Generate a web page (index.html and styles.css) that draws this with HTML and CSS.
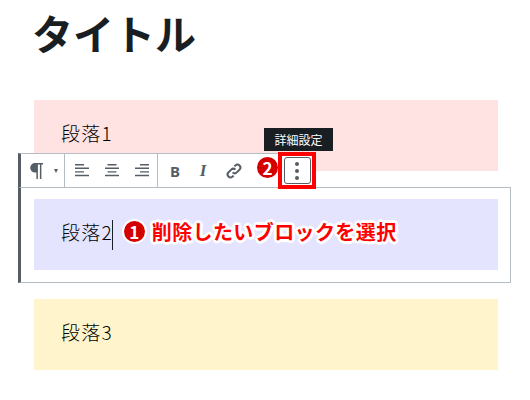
FILE: index.html
```html
<!DOCTYPE html>
<html lang="ja">
<head>
  <meta charset="UTF-8">
  <title>タイトル</title>
  <link rel="stylesheet" href="styles.css">
</head>
<body>
  <h1 class="title">タイトル</h1>

  <p class="block block-pink">段落1</p>

  <div class="selected">
    <div class="toolbar">
      <div class="tool-group tool-type">
        <svg width="14" height="16" viewBox="0 0 14 16"><path d="M13 0H5a4.8 4.8 0 0 0 0 9.6h1.4V16h1.5V1.4h2V16h1.5V1.4H13z" fill="#555d66"/></svg>
        <span class="caret"></span>
      </div>
      <div class="tool-group tool-align">
        <svg width="14" height="13" viewBox="0 0 14 13"><path d="M0 0h9v1.4H0zM0 3.6h14V5H0zM0 7.2h9v1.4H0zM0 10.8h14v1.4H0z" fill="#555d66"/></svg>
        <svg width="14" height="13" viewBox="0 0 14 13"><path d="M2.5 0h9v1.4h-9zM0 3.6h14V5H0zM2.5 7.2h9v1.4h-9zM0 10.8h14v1.4H0z" fill="#555d66"/></svg>
        <svg width="14" height="13" viewBox="0 0 14 13"><path d="M5 0h9v1.4H5zM0 3.6h14V5H0zM5 7.2h9v1.4H5zM0 10.8h14v1.4H0z" fill="#555d66"/></svg>
      </div>
      <div class="tool-group tool-format">
        <span class="fmt fmt-b">B</span>
        <span class="fmt fmt-i">I</span>
        <svg class="link-icon" width="20" height="20" viewBox="0 0 20 20" fill="none" stroke="#555d66" stroke-width="2"><path d="M8.6 11.4a3 3 0 0 0 4.2 0l3-3a3 3 0 0 0-4.2-4.2l-1.2 1.2"/><path d="M11.4 8.6a3 3 0 0 0-4.2 0l-3 3a3 3 0 0 0 4.2 4.2l1.2-1.2"/></svg>
      </div>
      <div class="tool-more">
        <span class="badge badge-two">2</span>
        <div class="more-frame">
          <div class="more-btn"><i></i><i></i><i></i></div>
        </div>
        <div class="tip">詳細設定</div>
      </div>
    </div>
    <div class="block block-blue">
      <span class="para-text">段落2</span><span class="cursor"></span>
      <span class="note"><span class="badge">1</span><span class="note-text">削除したいブロックを選択</span></span>
    </div>
  </div>

  <p class="block block-yellow">段落3</p>
</body>
</html>
```

FILE: styles.css
```css
body {
  margin: 0;
  padding: 0 19px 30px 18px;
  background-color: #fff;
  font-family: "Noto Sans CJK JP", "Noto Sans", sans-serif;
  color: #191e23;
  overflow: hidden;
}
.title {
  margin: 0 0 36px 14px;
  height: 64px;
  font-size: 41px;
  line-height: 64px;
  font-weight: 700;
}
.block {
  margin: 0 13px 0 16px;
  height: 71px;
  padding-left: 27px;
  font-size: 19px;
  font-weight: 300;
  letter-spacing: 1.2px;
  color: #000;
  line-height: 66px;
  box-sizing: border-box;
}
.block-pink {
  background-color: #ffe2e2;
}
.block-blue {
  margin: 0;
  padding-bottom: 6px;
  display: flex;
  align-items: center;
  background-color: #e4e4ff;
}
.block-yellow {
  margin-top: 16px;
  background-color: #fff4cc;
}
.selected {
  position: relative;
  margin-top: 16px;
  padding: 11px 12px 12px 13px;
  height: 96px;
  box-sizing: border-box;
  border: 1px solid #b5bcc2;
  border-left: 3px solid #555d66;
}
.toolbar {
  position: absolute;
  left: -3px;
  top: -35px;
  display: flex;
  height: 33px;
  background-color: #fff;
  border-top: 1px solid #b5bcc2;
  border-bottom: 1px solid #b5bcc2;
  border-left: 3px solid #555d66;
}
.tool-group {
  display: flex;
  align-items: center;
  box-sizing: border-box;
  border-right: 1px solid #b5bcc2;
}
.tool-type {
  width: 44px;
  padding-left: 9px;
}
.caret {
  margin-left: 10px;
  border-left: 2px solid transparent;
  border-right: 2px solid transparent;
  border-top: 4px solid #555d66;
}
.tool-align {
  width: 93px;
  padding-left: 10px;
  gap: 16px;
}
.tool-format {
  width: 120px;
  padding-left: 7px;
  gap: 8px;
  border-right: 0;
}
.fmt {
  width: 20px;
  text-align: center;
  font-size: 15px;
  font-weight: 700;
  color: #555d66;
  font-family: "Liberation Serif", serif;
}
.fmt-b {
  font-family: "Noto Sans", sans-serif;
}
.fmt-i {
  font-size: 17px;
  font-style: italic;
}
.link-icon {
  margin-left: 3px;
}
.tool-more {
  position: relative;
  width: 38px;
}
.more-frame {
  position: absolute;
  left: 0;
  top: -2px;
  width: 30px;
  height: 29px;
  border: 4px solid #f00;
  display: flex;
  align-items: center;
  justify-content: center;
}
.more-btn {
  width: 27px;
  height: 27px;
  box-sizing: border-box;
  border: 1px solid #555d66;
  border-radius: 3px;
  display: flex;
  flex-direction: column;
  align-items: center;
  justify-content: center;
  gap: 3px;
  background-color: #fff;
}
.more-btn i {
  width: 4px;
  height: 4px;
  border-radius: 50%;
  background-color: #555d66;
}
.tip {
  position: absolute;
  left: -14px;
  top: -26px;
  width: 69px;
  height: 23px;
  background-color: #191e23;
  color: #fff;
  font-size: 12px;
  font-weight: 400;
  line-height: 23px;
  text-align: center;
}
.badge {
  display: inline-block;
  width: 21px;
  height: 21px;
  border-radius: 50%;
  background-color: #d40000;
  color: #fff;
  font-size: 17px;
  font-weight: 700;
  letter-spacing: 0;
  line-height: 21px;
  text-align: center;
  box-shadow: 0 0 0 2px #fff;
}
.badge-two {
  position: absolute;
  left: -21px;
  top: 3px;
}
.para-text {
  line-height: 66px;
}
.cursor {
  width: 1px;
  height: 30px;
  margin-top: 6px;
  margin-left: -1px;
  background-color: #191e23;
}
.note {
  display: flex;
  align-items: center;
  margin-left: 11px;
}
.note-text {
  margin-left: 7px;
  color: #f00;
  font-size: 20px;
  font-weight: 700;
  letter-spacing: 0.4px;
  text-shadow: 2px 0 0 #fff, -2px 0 0 #fff, 0 2px 0 #fff, 0 -2px 0 #fff, 2px 2px 0 #fff, -2px 2px 0 #fff, 2px -2px 0 #fff, -2px -2px 0 #fff, 3px 0 0 #fff, -3px 0 0 #fff, 0 3px 0 #fff, 0 -3px 0 #fff;
}
```
